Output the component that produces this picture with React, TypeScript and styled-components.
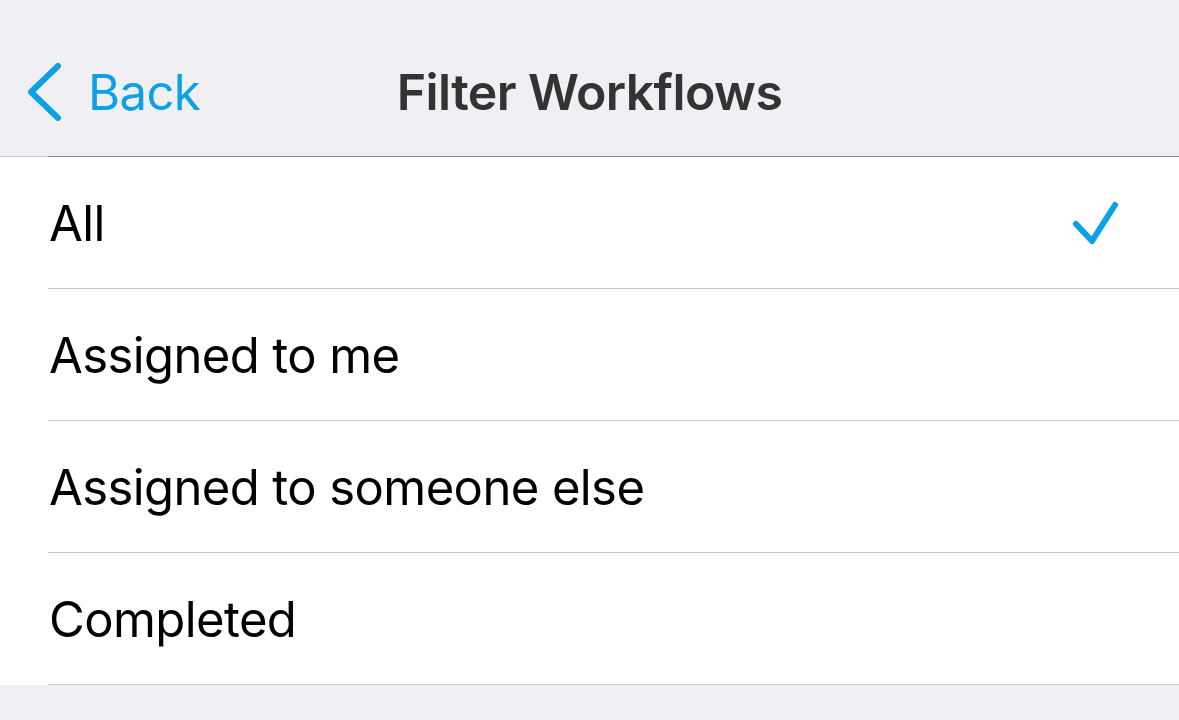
import React from "react";
import styled, { createGlobalStyle } from "styled-components";

const Global = createGlobalStyle`
  html, body { margin: 0; padding: 0; background: #efeff4; }
  body { font-family: Inter, "Noto Sans", "Liberation Sans", sans-serif; }
  * { box-sizing: border-box; }
`;

const Page = styled.div`
  width: 100%;
  min-height: 720px;
  background: #efeff4;
  display: flex;
  flex-direction: column;
`;

const NavBar = styled.header`
  position: relative;
  height: 157px;
  padding-top: 28px;
  display: flex;
  align-items: center;
  justify-content: center;
  background: #efeff4;
  flex-shrink: 0;
`;

const NavHairline = styled.div`
  position: absolute;
  left: 0;
  right: 0;
  bottom: 0;
  height: 1px;
  background: linear-gradient(to right, #c3c3c6 48px, #8c8c8e 48px);
`;

const BackButton = styled.button`
  position: absolute;
  left: 24px;
  top: 28px;
  bottom: 1px;
  display: flex;
  align-items: center;
  gap: 24px;
  border: none;
  background: none;
  padding: 0;
  color: #0ba0e8;
  font-family: inherit;
  font-size: 49px;
  letter-spacing: -0.6px;
  cursor: pointer;
`;

const Title = styled.h1`
  margin: 0;
  font-size: 50px;
  font-weight: 600;
  color: #333333;
  letter-spacing: -0.6px;
  padding-bottom: 1px;
`;

const List = styled.ul`
  list-style: none;
  margin: 0;
  padding: 0;
  background: #ffffff;
`;

const Row = styled.li`
  height: 132px;
  padding-left: 48px;
  display: flex;
`;

const RowInner = styled.div`
  flex: 1;
  display: flex;
  align-items: center;
  justify-content: space-between;
  border-bottom: 1px solid #c8c7cc;
  padding-right: 58px;
`;

const Label = styled.span`
  font-size: 49px;
  color: #000000;
  letter-spacing: -0.6px;
  padding-left: 1px;
  padding-top: 2px;
`;

const Chevron = () => (
  <svg width="40" height="60" viewBox="0 0 40 60" aria-hidden="true">
    <path
      d="M34 4 L7 30 L34 56"
      fill="none"
      stroke="#0ba0e8"
      strokeWidth="6"
      strokeLinecap="round"
      strokeLinejoin="round"
    />
  </svg>
);

const Check = () => (
  <svg width="50" height="44" viewBox="0 0 50 44" aria-hidden="true">
    <path
      d="M5 23 L21 40 L44 4"
      fill="none"
      stroke="#0ba0e8"
      strokeWidth="6"
      strokeLinecap="round"
      strokeLinejoin="round"
    />
  </svg>
);

const options = ["All", "Assigned to me", "Assigned to someone else", "Completed"];

export default function App() {
  const selected = 0;
  return (
    <>
      <Global />
      <Page>
        <NavBar>
          <BackButton>
            <Chevron />
            <span>Back</span>
          </BackButton>
          <Title>Filter Workflows</Title>
          <NavHairline />
        </NavBar>
        <List>
          {options.map((o, i) => (
            <Row key={o}>
              <RowInner>
                <Label>{o}</Label>
                {i === selected && <Check />}
              </RowInner>
            </Row>
          ))}
        </List>
      </Page>
    </>
  );
}
